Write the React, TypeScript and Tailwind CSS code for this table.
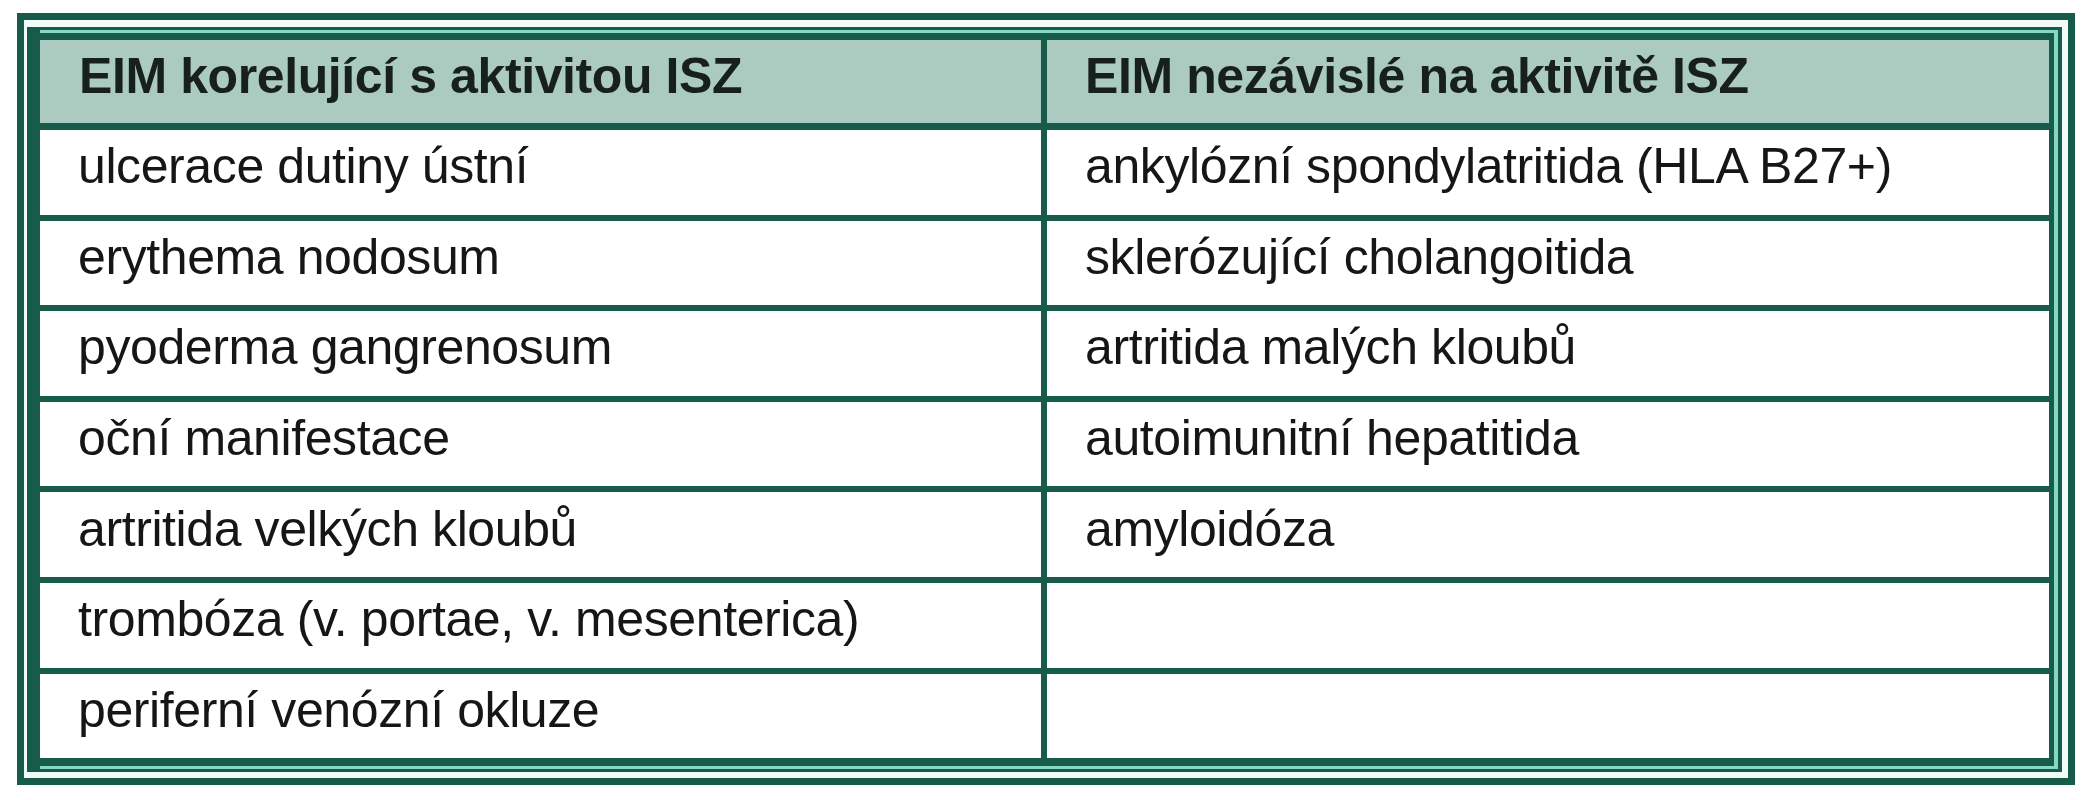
const left = [
  "ulcerace dutiny ústní",
  "erythema nodosum",
  "pyoderma gangrenosum",
  "oční manifestace",
  "artritida velkých kloubů",
  "trombóza (v. portae, v. mesenterica)",
  "periferní venózní okluze",
];

const right = [
  "ankylózní spondylatritida (HLA B27+)",
  "sklerózující cholangoitida",
  "artritida malých kloubů",
  "autoimunitní hepatitida",
  "amyloidóza",
  "",
  "",
];

export default function App() {
  return (
    <div className="w-[2089px] h-[800px] bg-white pt-[13px] pl-[17px] font-['Liberation_Sans',Arial,sans-serif]">
      <div className="w-[2058px] h-[772px] border-[7px] border-[#175c4a] bg-[#f1fcf9] pt-[7px] pl-[3px] pr-[6px] pb-[6px]">
        <div className="h-full border-[#175c4a] border-t-[3px] border-r-[4px] border-b-[3px] border-l-[13px] bg-[#86d8c3] pt-[3px] pr-[4px] pb-[3px]">
          <div className="h-full bg-white border-[#175c4a] border-t-[7px] border-r-[5px] border-b-[8px] flex flex-col">
            {/* header */}
            <div className="h-[90px] shrink-0 grid grid-cols-[1001px_6px_1fr] bg-[#abcbc0] border-b-[7px] border-[#175c4a]">
              <div className="pl-[39px] pb-[12px] text-[50px] tracking-[-0.4px] font-bold text-[#18201d] leading-none flex items-center">
                EIM korelující s aktivitou ISZ
              </div>
              <div className="bg-[#175c4a]" />
              <div className="pl-[38px] pb-[12px] text-[50px] tracking-[-0.4px] font-bold text-[#18201d] leading-none flex items-center">
                EIM nezávislé na aktivitě ISZ
              </div>
            </div>
            {left.map((l, i) => (
              <div
                key={i}
                className={`grid grid-cols-[1001px_6px_1fr] ${i < left.length - 1 ? "h-[90.6px] border-b-[6px] border-[#175c4a]" : "flex-1"}`}
              >
                <div className="pl-[38px] pb-[12px] text-[50px] tracking-[-0.4px] text-[#161616] leading-none flex items-center">{l}</div>
                <div className="bg-[#175c4a]" />
                <div className="pl-[38px] pb-[12px] text-[50px] tracking-[-0.4px] text-[#161616] leading-none flex items-center">{right[i]}</div>
              </div>
            ))}
          </div>
        </div>
      </div>
    </div>
  );
}
